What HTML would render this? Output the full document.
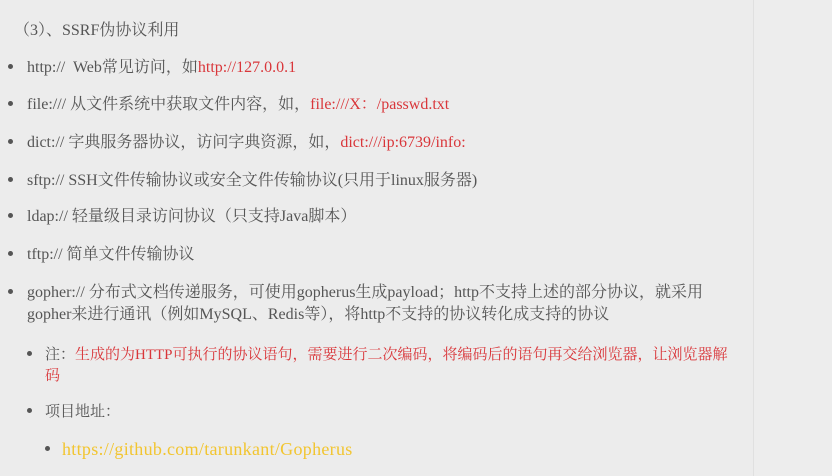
<!DOCTYPE html>
<html><head><meta charset="utf-8"><style>
body{margin:0;width:832px;height:476px;background:#ececec;overflow:hidden;position:relative;font-family:"Liberation Serif","Noto Serif CJK SC",serif;font-size:16px;color:#555;}
.r{position:absolute;right:0;top:0;width:78px;height:476px;border-left:1px solid #e0e0e0;background:#ededed}
.l{position:absolute;white-space:nowrap;line-height:20px}
.d{position:absolute;width:5px;height:5px;border-radius:50%;background:#555}
.red{color:#d9363a}
.y{color:#f2c530;font-size:18px;letter-spacing:0.3px}
.s{font-size:15px}
</style></head><body>
<div class="r"></div>
<div class="l" style="left:14px;top:21px">（3）、SSRF伪协议利用</div>
<div class="d" style="left:8px;top:64px"></div><div class="l" style="left:27px;top:58px">http://&nbsp; Web常见访问，如<span class="red">http://127.0.0.1</span></div>
<div class="d" style="left:8px;top:101px"></div><div class="l" style="left:27px;top:95px">file:/// 从文件系统中获取文件内容，如，<span class="red">file:///X：/passwd.txt</span></div>
<div class="d" style="left:8px;top:139px"></div><div class="l" style="left:27px;top:133px">dict:// 字典服务器协议，访问字典资源，如，<span class="red">dict:///ip:6739/info:</span></div>
<div class="d" style="left:8px;top:177px"></div><div class="l" style="left:27px;top:171px">sftp:// SSH文件传输协议或安全文件传输协议(只用于linux服务器)</div>
<div class="d" style="left:8px;top:213px"></div><div class="l" style="left:27px;top:207px">ldap:// 轻量级目录访问协议（只支持Java脚本）</div>
<div class="d" style="left:8px;top:251px"></div><div class="l" style="left:27px;top:245px">tftp:// 简单文件传输协议</div>
<div class="d" style="left:8px;top:289px"></div><div class="l" style="left:27px;top:283px">gopher:// 分布式文档传递服务，可使用gopherus生成payload；http不支持上述的部分协议，就采用</div>
<div class="l" style="left:27px;top:305px">gopher来进行通讯（例如MySQL、Redis等），将http不支持的协议转化成支持的协议</div>
<div class="d" style="left:27px;top:351px"></div><div class="l s" style="left:45px;top:345px">注：<span class="red">生成的为HTTP可执行的协议语句，需要进行二次编码，将编码后的语句再交给浏览器，让浏览器解</span></div>
<div class="l red s" style="left:45px;top:366px">码</div>
<div class="d" style="left:27px;top:408px"></div><div class="l s" style="left:45px;top:402px">项目地址：</div>
<div class="d" style="left:45px;top:446px"></div><div class="l y" style="left:62px;top:439px">https://github.com/tarunkant/Gopherus</div>
</body></html>
